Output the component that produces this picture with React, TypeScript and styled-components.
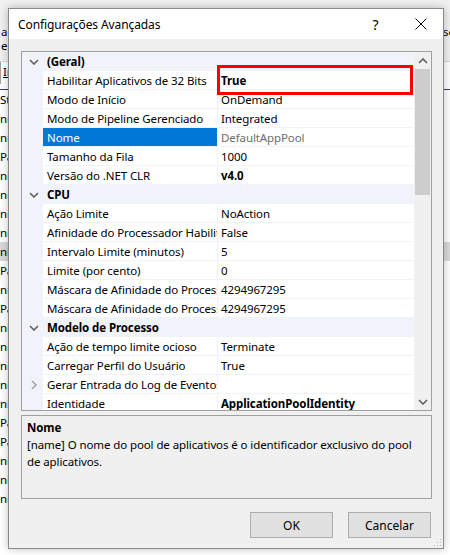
import React from 'react'
import styled, { createGlobalStyle, css } from 'styled-components'

const FONT = `"Segoe UI", "Noto Sans", "Open Sans", sans-serif`
const LINE = '#f0f3f9'

type Row =
  | { kind: 'category'; label: string }
  | {
      kind: 'prop'
      name: string
      value: string
      bold?: boolean
      readOnly?: boolean
      selected?: boolean
      expandable?: boolean
    }

const rows: Row[] = [
  { kind: 'category', label: '(Geral)' },
  { kind: 'prop', name: 'Habilitar Aplicativos de 32 Bits', value: 'True', bold: true },
  { kind: 'prop', name: 'Modo de Início', value: 'OnDemand' },
  { kind: 'prop', name: 'Modo de Pipeline Gerenciado', value: 'Integrated' },
  { kind: 'prop', name: 'Nome', value: 'DefaultAppPool', readOnly: true, selected: true },
  { kind: 'prop', name: 'Tamanho da Fila', value: '1000' },
  { kind: 'prop', name: 'Versão do .NET CLR', value: 'v4.0', bold: true },
  { kind: 'category', label: 'CPU' },
  { kind: 'prop', name: 'Ação Limite', value: 'NoAction' },
  { kind: 'prop', name: 'Afinidade do Processador Habilitada', value: 'False' },
  { kind: 'prop', name: 'Intervalo Limite (minutos)', value: '5' },
  { kind: 'prop', name: 'Limite (por cento)', value: '0' },
  { kind: 'prop', name: 'Máscara de Afinidade do Processador', value: '4294967295' },
  { kind: 'prop', name: 'Máscara de Afinidade do Processador (64 bits)', value: '4294967295' },
  { kind: 'category', label: 'Modelo de Processo' },
  { kind: 'prop', name: 'Ação de tempo limite ocioso', value: 'Terminate' },
  { kind: 'prop', name: 'Carregar Perfil do Usuário', value: 'True' },
  { kind: 'prop', name: 'Gerar Entrada do Log de Eventos', value: '', expandable: true },
  { kind: 'prop', name: 'Identidade', value: 'ApplicationPoolIdentity', bold: true },
]

const backdropRows = [
  'St', 'ni', 'ni', 'Pa', 'ni', 'ni', 'ni', 'ni', 'ni', 'Pa', 'ni',
  'Pa', 'ni', 'ni', 'ni', 'ni', 'ni', 'Pa', 'Pa', 'ni', 'ni', 'ni',
]

const ChevronDown = ({ color = '#606060' }: { color?: string }) => (
  <svg width="10" height="6" viewBox="0 0 10 6">
    <path d="M1 1 L5 5 L9 1" fill="none" stroke={color} strokeWidth="1.6" />
  </svg>
)

const ChevronRight = ({ color = '#a8a8a8' }: { color?: string }) => (
  <svg width="6" height="10" viewBox="0 0 6 10">
    <path d="M1 1 L5 5 L1 9" fill="none" stroke={color} strokeWidth="1.6" />
  </svg>
)

const ChevronUp = ({ color = '#606060' }: { color?: string }) => (
  <svg width="10" height="6" viewBox="0 0 10 6">
    <path d="M1 5 L5 1 L9 5" fill="none" stroke={color} strokeWidth="1.6" />
  </svg>
)

const CloseIcon = () => (
  <svg width="12" height="12" viewBox="0 0 12 12">
    <path d="M0.5 0.5 L11.5 11.5 M11.5 0.5 L0.5 11.5" stroke="#000" strokeWidth="1" />
  </svg>
)

export default function App() {
  return (
    <>
      <GlobalStyle />
      <Page>
        <Backdrop>
          <BackToolbar>
            <BackLine>a</BackLine>
            <BackLine>en</BackLine>
            <BackRightText>se</BackRightText>
          </BackToolbar>
          <BackTabs>
            <BackTab>Ir</BackTab>
          </BackTabs>
          {backdropRows.map((t, i) => (
            <BackRow key={i} $selected={i === 8}>
              {t}
            </BackRow>
          ))}
        </Backdrop>

        <Dialog>
          <TitleBar>
            <Title>Configurações Avançadas</Title>
            <TitleButton>?</TitleButton>
            <TitleButton>
              <CloseIcon />
            </TitleButton>
          </TitleBar>

          <DialogBody>
            <Grid>
              <GridRows>
                {rows.map((r, i) =>
                  r.kind === 'category' ? (
                    <CategoryRow key={i}>
                      <Gutter>
                        <ChevronDown />
                      </Gutter>
                      <CategoryLabel>{r.label}</CategoryLabel>
                    </CategoryRow>
                  ) : (
                    <PropRow key={i}>
                      <Gutter>{r.expandable && <ChevronRight />}</Gutter>
                      <NameCell $selected={r.selected}>{r.name}</NameCell>
                      <ValueCell $bold={r.bold} $readOnly={r.readOnly}>
                        {r.value}
                      </ValueCell>
                    </PropRow>
                  ),
                )}
                <Highlight />
              </GridRows>
              <ScrollBar>
                <ScrollArrow>
                  <ChevronUp />
                </ScrollArrow>
                <ScrollTrack>
                  <ScrollThumb />
                </ScrollTrack>
                <ScrollArrow>
                  <ChevronDown />
                </ScrollArrow>
              </ScrollBar>
            </Grid>

            <Description>
              <DescTitle>Nome</DescTitle>
              <DescText>
                [name] O nome do pool de aplicativos é o identificador exclusivo do pool
                <br />
                de aplicativos.
              </DescText>
            </Description>

            <ButtonRow>
              <DialogButton>OK</DialogButton>
              <DialogButton>Cancelar</DialogButton>
            </ButtonRow>
          </DialogBody>
          <Grip />
        </Dialog>
      </Page>
    </>
  )
}

const GlobalStyle = createGlobalStyle`
  html, body {
    margin: 0;
    padding: 0;
    background: #ffffff;
  }
  body {
    font-family: ${FONT};
    font-size: 11.5px;
    letter-spacing: -0.1px;
    color: #000000;
  }
  * {
    box-sizing: border-box;
  }
`

const Page = styled.div`
  position: relative;
  width: 450px;
  height: 555px;
  overflow: hidden;
  background: #ffffff;
`

const Backdrop = styled.div`
  display: flex;
  flex-direction: column;
  width: 100%;
  height: 100%;
  background: #ffffff;
`

const BackToolbar = styled.div`
  position: relative;
  display: flex;
  flex-direction: column;
  height: 62px;
  padding-top: 25px;
  background: #f0f0f0;
  border-bottom: 1px solid #d9d9d9;
`

const BackLine = styled.div`
  height: 14px;
  line-height: 14px;
  padding-left: 1px;
`

const BackRightText = styled.div`
  position: absolute;
  top: 25px;
  left: 443px;
  line-height: 14px;
`

const BackTabs = styled.div`
  display: flex;
  height: 28px;
  border-bottom: 1px solid #3c3c6c;
`

const BackTab = styled.div`
  height: 22px;
  line-height: 20px;
  padding-left: 2px;
  border-left: 1px solid #a0a0a0;
  text-decoration: underline;
`

const BackRow = styled.div<{ $selected?: boolean }>`
  height: 19px;
  line-height: 19px;
  flex-shrink: 0;
  background: ${p => (p.$selected ? '#d9d9d9' : 'transparent')};
`

const Dialog = styled.div`
  position: absolute;
  left: 8px;
  top: 8px;
  width: 436px;
  height: 541px;
  display: flex;
  flex-direction: column;
  background: #f0f0f0;
  border: 1px solid #8a8a8a;
  box-shadow: 0 0 8px rgba(0, 0, 0, 0.25);
`

const TitleBar = styled.div`
  display: flex;
  align-items: center;
  height: 30px;
  flex-shrink: 0;
  background: #ffffff;
`

const Title = styled.div`
  flex: 1;
  padding-left: 9px;
  font-size: 12px;
`

const TitleButton = styled.div`
  display: flex;
  align-items: center;
  justify-content: center;
  width: 45px;
  height: 30px;
  font-size: 14px;
`

const DialogBody = styled.div`
  display: flex;
  flex-direction: column;
  padding: 12px 11px 0 12px;
`

const Grid = styled.div`
  display: flex;
  height: 360px;
  border: 1px solid #a0a0a0;
  background: #ffffff;
`

const GridRows = styled.div`
  position: relative;
  flex: 1;
  overflow: hidden;
`

const rowBase = css`
  display: grid;
  grid-template-columns: 21px 175px 1fr;
  height: 19px;
  white-space: nowrap;
`

const cellText = css`
  padding-top: 2px;
  line-height: 16px;
`

const CategoryRow = styled.div`
  ${rowBase};
  background: ${LINE};
`

const PropRow = styled.div`
  ${rowBase};
`

const Gutter = styled.div`
  display: flex;
  align-items: center;
  justify-content: center;
  padding: 1px 0 0 2px;
  background: ${LINE};
`

const CategoryLabel = styled.div`
  ${cellText};
  grid-column: 2 / 4;
  padding-left: 4px;
  font-weight: 700;
  border-bottom: 1px solid ${LINE};
`

const NameCell = styled.div<{ $selected?: boolean }>`
  ${cellText};
  overflow: hidden;
  padding-left: 4px;
  border-right: 1px solid ${LINE};
  border-bottom: 1px solid ${LINE};
  background: ${p => (p.$selected ? '#0078d7' : '#ffffff')};
  color: ${p => (p.$selected ? '#ffffff' : '#000000')};
`

const ValueCell = styled.div<{ $bold?: boolean; $readOnly?: boolean }>`
  ${cellText};
  overflow: hidden;
  padding-left: 3px;
  border-bottom: 1px solid ${LINE};
  font-weight: ${p => (p.$bold ? 700 : 400)};
  color: ${p => (p.$readOnly ? '#6d6d6d' : '#000000')};
`

const Highlight = styled.div`
  position: absolute;
  left: 195px;
  top: 13px;
  width: 196px;
  height: 30px;
  border: 3px solid #ff0000;
  pointer-events: none;
`

const ScrollBar = styled.div`
  display: flex;
  flex-direction: column;
  width: 17px;
  background: #f0f0f0;
`

const ScrollArrow = styled.div`
  display: flex;
  align-items: center;
  justify-content: center;
  height: 17px;
  flex-shrink: 0;
`

const ScrollTrack = styled.div`
  flex: 1;
  padding: 0 1px;
`

const ScrollThumb = styled.div`
  height: 126px;
  background: #cdcdcd;
`

const Description = styled.div`
  margin-top: 4px;
  height: 84px;
  padding: 3px 5px;
  border: 1px solid #a0a0a0;
  background: #f0f0f0;
`

const DescTitle = styled.div`
  font-weight: 700;
  line-height: 17px;
`

const DescText = styled.div`
  line-height: 17px;
  white-space: nowrap;
`

const ButtonRow = styled.div`
  display: flex;
  justify-content: flex-end;
  gap: 15px;
  margin-top: 13px;
  padding-right: 1px;
`

const DialogButton = styled.button`
  width: 83px;
  height: 26px;
  padding: 0;
  font-family: ${FONT};
  font-size: 12px;
  color: #000000;
  background: #e1e1e1;
  border: 1px solid #adadad;
`

const Grip = styled.div`
  position: absolute;
  right: 2px;
  bottom: 2px;
  width: 8px;
  height: 8px;
  background-image: radial-gradient(circle, #b8b8b8 0.8px, transparent 1px);
  background-size: 3px 3px;
  clip-path: polygon(100% 0, 100% 100%, 0 100%);
`
